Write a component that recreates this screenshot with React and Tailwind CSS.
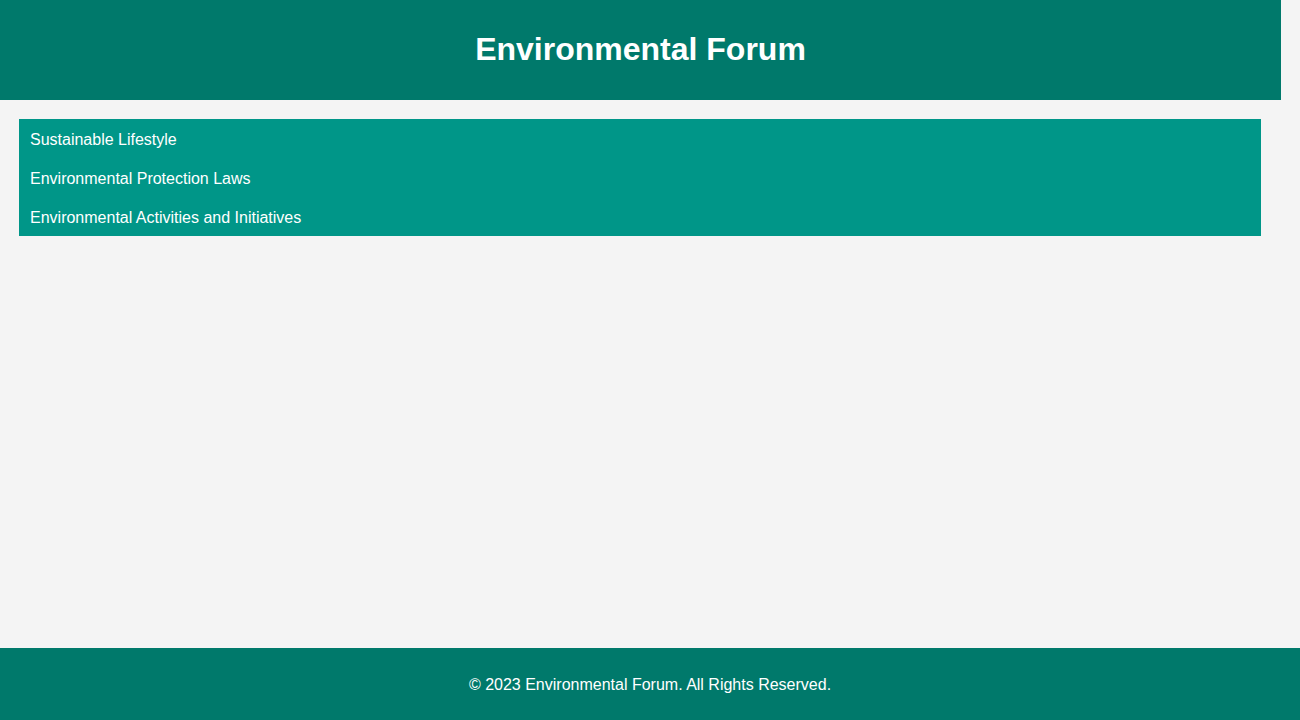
const topics = [
  'Sustainable Lifestyle',
  'Environmental Protection Laws',
  'Environmental Activities and Initiatives',
]

export default function App() {
  return (
    <div className="min-h-screen flex flex-col bg-[#f4f4f4] font-['Liberation_Sans',Arial,sans-serif] text-white">
      {/* Header */}
      <header className="w-[1281px] bg-[#00796b] px-[10px] pt-[29px] pb-[31px]">
        <h1 className="text-center text-[32px] leading-[40px] font-bold">
          Environmental Forum
        </h1>
      </header>

      {/* Topics */}
      <main className="w-[1281px] p-[19px] pr-[20px]">
        <ul>
          {topics.map((topic) => (
            <li
              key={topic}
              className="bg-[#009688] px-[11px] pt-[11px] pb-[9px] text-base leading-[19px] cursor-pointer hover:bg-[#00897b]"
            >
              {topic}
            </li>
          ))}
        </ul>
      </main>

      {/* Footer */}
      <footer className="mt-auto bg-[#00796b] px-[10px] pt-[26px] pb-[24px]">
        <p className="text-center text-base leading-[22px]">
          © 2023 Environmental Forum. All Rights Reserved.
        </p>
      </footer>
    </div>
  )
}
